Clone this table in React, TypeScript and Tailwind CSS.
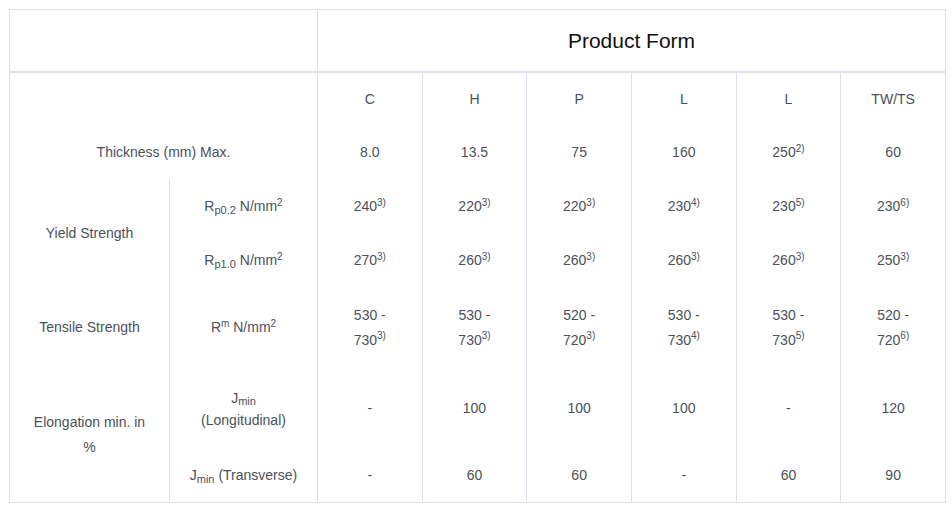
import React from 'react';

const line = 'border-[#dcdfe9]';

type Cell = React.ReactNode;

const Sup = ({ children }: { children: React.ReactNode }) => (
  <sup className="text-[10px] -top-[0.55em]">{children}</sup>
);

const Sub = ({ children }: { children: React.ReactNode }) => (
  <sub className="text-[11px]">{children}</sub>
);

const v = (n: string, note?: string) => (
  <>
    {n}
    {note && <Sup>{note}</Sup>}
  </>
);

const range = (a: string, b: string, note: string) => (
  <>
    {a} -<br />
    {b}
    <Sup>{note}</Sup>
  </>
);

function DataCells({ cells, h }: { cells: Cell[]; h: string }) {
  return (
    <>
      {cells.map((c, i) => (
        <td key={i} className={`border-l ${line} text-center align-middle ${h}`}>
          {c}
        </td>
      ))}
    </>
  );
}

export default function App() {
  return (
    <div className="bg-white w-[952px] h-[507px] pl-[9px] pt-[9px]" style={{ fontFamily: '"Liberation Sans", Arial, sans-serif' }}>
      <table className={`w-[936px] table-fixed border-collapse border ${line} text-[14px] leading-[25px] text-[#4b505c]`}>
        <colgroup>
          <col className="w-[160px]" />
          <col className="w-[148px]" />
          <col className="w-[104.67px]" />
          <col className="w-[104.67px]" />
          <col className="w-[104.67px]" />
          <col className="w-[104.67px]" />
          <col className="w-[104.67px]" />
          <col className="w-[104.67px]" />
        </colgroup>
        <tbody>
          <tr>
            <td colSpan={2} className={`h-[62px] border-b-2 ${line}`} />
            <td colSpan={6} className={`h-[62px] border-b-2 border-l ${line} text-center text-[21px] text-[#111]`}>
              Product Form
            </td>
          </tr>
          <tr>
            <td colSpan={2} className="h-[54px]" />
            <DataCells h="h-[54px]" cells={['C', 'H', 'P', 'L', 'L', 'TW/TS']} />
          </tr>
          <tr>
            <td colSpan={2} className="h-[54px] text-center">Thickness (mm) Max.</td>
            <DataCells h="h-[54px]" cells={['8.0', '13.5', '75', '160', v('250', '2)'), '60']} />
          </tr>
          <tr>
            <td rowSpan={2} className="text-center px-4">Yield Strength</td>
            <td className={`h-[54px] border-l ${line} text-center`}>
              R<Sub>p0.2</Sub> N/mm<Sup>2</Sup>
            </td>
            <DataCells
              h="h-[54px]"
              cells={[v('240', '3)'), v('220', '3)'), v('220', '3)'), v('230', '4)'), v('230', '5)'), v('230', '6)')]}
            />
          </tr>
          <tr>
            <td className={`h-[54px] border-l ${line} text-center`}>
              R<Sub>p1.0</Sub> N/mm<Sup>2</Sup>
            </td>
            <DataCells
              h="h-[54px]"
              cells={[v('270', '3)'), v('260', '3)'), v('260', '3)'), v('260', '3)'), v('260', '3)'), v('250', '3)')]}
            />
          </tr>
          <tr>
            <td className="h-[80px] text-center px-4">Tensile Strength</td>
            <td className={`h-[80px] border-l ${line} text-center`}>
              R<Sup>m</Sup> N/mm<Sup>2</Sup>
            </td>
            <DataCells
              h="h-[80px]"
              cells={[
                range('530', '730', '3)'),
                range('530', '730', '3)'),
                range('520', '720', '3)'),
                range('530', '730', '4)'),
                range('530', '730', '5)'),
                range('520', '720', '6)'),
              ]}
            />
          </tr>
          <tr>
            <td rowSpan={2} className="text-center px-4">
              Elongation min. in
              <br />%
            </td>
            <td className={`h-[82px] border-l ${line} text-center leading-[22px]`}>
              J<Sub>min</Sub>
              <br />
              (Longitudinal)
            </td>
            <DataCells h="h-[82px]" cells={['-', '100', '100', '100', '-', '120']} />
          </tr>
          <tr>
            <td className={`h-[53px] border-l ${line} text-center`}>
              J<Sub>min</Sub> (Transverse)
            </td>
            <DataCells h="h-[53px]" cells={['-', '60', '60', '-', '60', '90']} />
          </tr>
        </tbody>
      </table>
    </div>
  );
}
